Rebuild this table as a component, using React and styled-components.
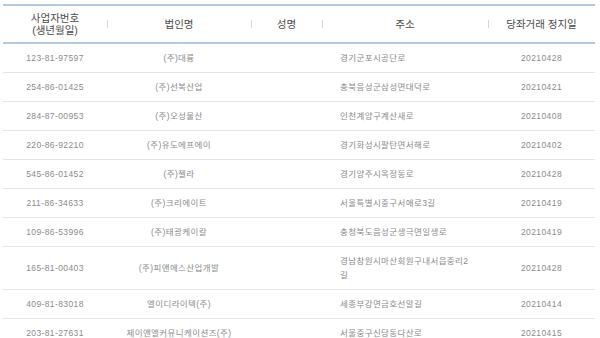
import React from 'react';
import styled, { createGlobalStyle } from 'styled-components';

const rows = [
  { no: '123-81-97597', corp: '(주)대륭', name: '', addr: '경기군포시공단로', date: '20210428' },
  { no: '254-86-01425', corp: '(주)선복산업', name: '', addr: '충북음성군삼성면대덕로', date: '20210421' },
  { no: '284-87-00953', corp: '(주)오성물산', name: '', addr: '인천계양구계산새로', date: '20210408' },
  { no: '220-86-92210', corp: '(주)유도에프에이', name: '', addr: '경기화성시팔탄면서해로', date: '20210402' },
  { no: '545-86-01452', corp: '(주)젤라', name: '', addr: '경기양주시옥정동로', date: '20210428' },
  { no: '211-86-34633', corp: '(주)크리에이트', name: '', addr: '서울특별시중구서애로3길', date: '20210419' },
  { no: '109-86-53996', corp: '(주)태광케이칼', name: '', addr: '충청북도음성군생극면일생로', date: '20210419' },
  { no: '165-81-00403', corp: '(주)피앤에스산업개발', name: '', addr: '경남창원시마산회원구내서읍중리2길', date: '20210428' },
  { no: '409-81-83018', corp: '엘이디라이텍(주)', name: '', addr: '세종부강면금호선말길', date: '20210414' },
  { no: '203-81-27631', corp: '제이앤엘커뮤니케이션즈(주)', name: '', addr: '서울중구신당동다산로', date: '20210415' },
];

const columns = [
  { key: 'no', label: ['사업자번호', '(생년월일)'], width: 104 },
  { key: 'corp', label: ['법인명'], width: 144 },
  { key: 'name', label: ['성명'], width: 71 },
  { key: 'addr', label: ['주소'], width: 166 },
  { key: 'date', label: ['당좌거래 정지일'], width: 107 },
];

const GlobalStyle = createGlobalStyle`
  html, body {
    margin: 0;
    padding: 0;
    background: #fff;
  }
  body {
    font-family: "Liberation Sans", "Noto Sans CJK KR", sans-serif;
  }
`;

const Wrap = styled.div`
  width: 600px;
  padding: 4px 5px 0 3px;
  box-sizing: border-box;
`;

const Table = styled.table`
  width: 592px;
  border-collapse: collapse;
  table-layout: fixed;
`;

const HeadRow = styled.tr`
  border-top: 2px solid #b4cadb;
  border-bottom: 2px solid #b4cadb;
`;

const Th = styled.th`
  position: relative;
  height: 36px;
  padding: 0;
  font-family: "Liberation Sans", "Noto Sans CJK KR", sans-serif;
  font-size: 10.5px;
  font-weight: 400;
  line-height: 12.5px;
  color: #4a4a4a;
  text-align: center;

  & + &::before {
    content: '';
    position: absolute;
    left: 0;
    top: 14px;
    width: 1px;
    height: 8px;
    background: #d6d6d6;
  }
`;

const HeadLine = styled.span`
  display: block;
`;

const Row = styled.tr`
  border-bottom: 1px solid #e4e4e4;
`;

const Td = styled.td`
  padding: 7px 0;
  font-size: 8.5px;
  letter-spacing: 0.4px;
  line-height: 14px;
  color: #8a8a8a;
  text-align: ${(p) => (p.$left ? 'left' : 'center')};
  padding-left: ${(p) => (p.$left ? '18px' : '0')};
  padding-right: ${(p) => (p.$left ? '12px' : '0')};
  word-break: break-all;
`;

export default function App() {
  return (
    <>
      <GlobalStyle />
      <Wrap>
        <Table>
          <colgroup>
            {columns.map((c) => (
              <col key={c.key} style={{ width: c.width }} />
            ))}
          </colgroup>
          <thead>
            <HeadRow>
              {columns.map((c) => (
                <Th key={c.key}>
                  {c.label.map((l) => (
                    <HeadLine key={l}>{l}</HeadLine>
                  ))}
                </Th>
              ))}
            </HeadRow>
          </thead>
          <tbody>
            {rows.map((r) => (
              <Row key={r.no}>
                {columns.map((c) => (
                  <Td key={c.key} $left={c.key === 'addr'}>
                    {r[c.key]}
                  </Td>
                ))}
              </Row>
            ))}
          </tbody>
        </Table>
      </Wrap>
    </>
  );
}
